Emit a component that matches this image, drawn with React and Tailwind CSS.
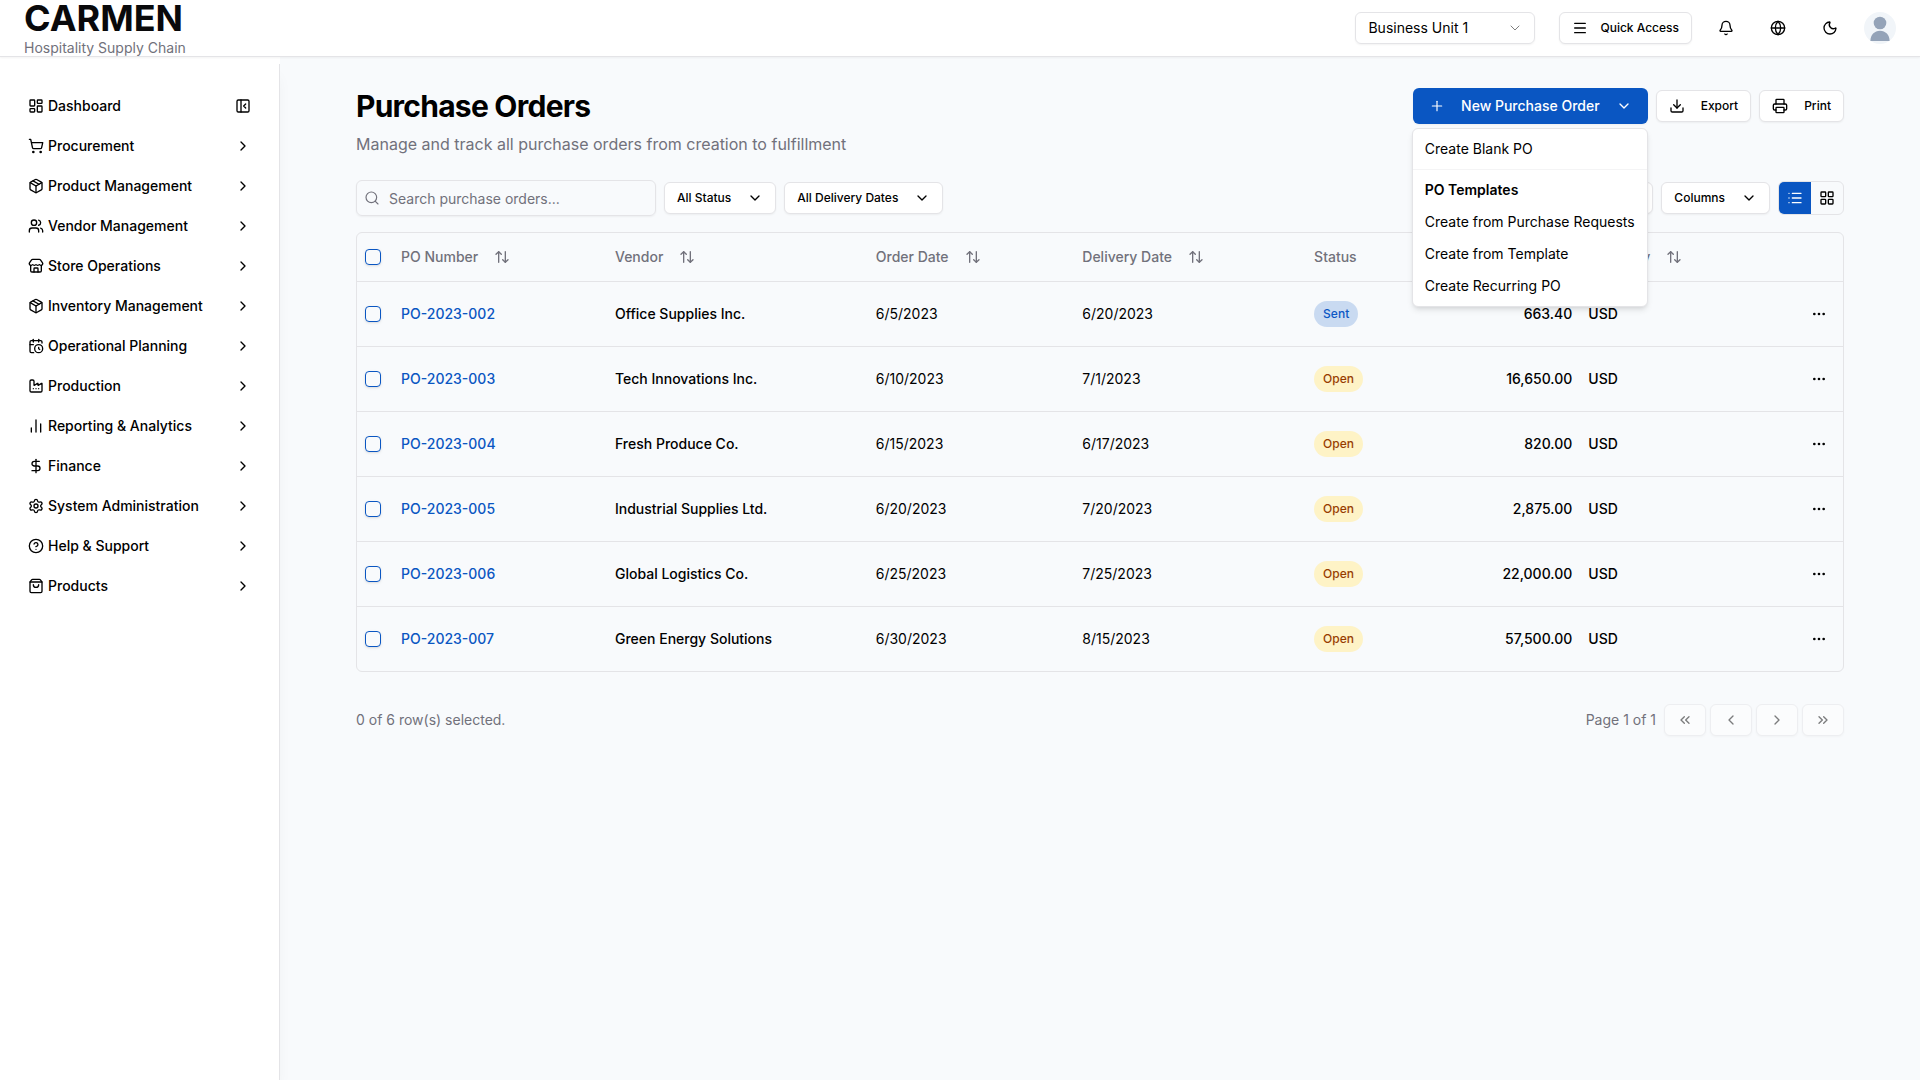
import {
  ArrowUpDown, Bell, CalendarClock, ChartNoAxesColumn, ChevronDown, ChevronLeft, ChevronRight,
  ChevronsLeft, ChevronsRight, CircleQuestionMark, DollarSign, Download, Ellipsis, Factory, Globe,
  LayoutDashboard, LayoutGrid, List, Menu, Moon, Package, PanelLeftClose, Plus, Printer, Search,
  Settings, ShoppingBag, ShoppingCart, Store, Users,
} from "lucide-react";

const NAV = [
  { label: "Dashboard", icon: LayoutDashboard },
  { label: "Procurement", icon: ShoppingCart },
  { label: "Product Management", icon: Package },
  { label: "Vendor Management", icon: Users },
  { label: "Store Operations", icon: Store },
  { label: "Inventory Management", icon: Package },
  { label: "Operational Planning", icon: CalendarClock },
  { label: "Production", icon: Factory },
  { label: "Reporting & Analytics", icon: ChartNoAxesColumn },
  { label: "Finance", icon: DollarSign },
  { label: "System Administration", icon: Settings },
  { label: "Help & Support", icon: CircleQuestionMark },
  { label: "Products", icon: ShoppingBag },
];

const ORDERS = [
  { id: "PO-2023-002", vendor: "Office Supplies Inc.", ordered: "6/5/2023", delivery: "6/20/2023", status: "Sent", amount: "663.40" },
  { id: "PO-2023-003", vendor: "Tech Innovations Inc.", ordered: "6/10/2023", delivery: "7/1/2023", status: "Open", amount: "16,650.00" },
  { id: "PO-2023-004", vendor: "Fresh Produce Co.", ordered: "6/15/2023", delivery: "6/17/2023", status: "Open", amount: "820.00" },
  { id: "PO-2023-005", vendor: "Industrial Supplies Ltd.", ordered: "6/20/2023", delivery: "7/20/2023", status: "Open", amount: "2,875.00" },
  { id: "PO-2023-006", vendor: "Global Logistics Co.", ordered: "6/25/2023", delivery: "7/25/2023", status: "Open", amount: "22,000.00" },
  { id: "PO-2023-007", vendor: "Green Energy Solutions", ordered: "6/30/2023", delivery: "8/15/2023", status: "Open", amount: "57,500.00" },
];

const BADGE = {
  Sent: "bg-[#c9daf1] text-[#0b57c4]",
  Open: "bg-amber-100 text-amber-800",
};

const OUTLINE = "flex h-8 items-center rounded-md border border-zinc-200 bg-white px-3 text-xs font-medium shadow-xs";

function OutlineButton({ children, className = "" }) {
  return <button type="button" className={`${OUTLINE} gap-4 ${className}`}>{children}</button>;
}

function IconButton({ label, icon: Icon }) {
  return (
    <button type="button" aria-label={label} className="flex size-9 items-center justify-center rounded-md">
      <Icon className="size-4" />
    </button>
  );
}

function Header() {
  return (
    <header className="relative z-10 flex h-[57px] items-center justify-between border-b border-zinc-200 bg-white px-6 shadow-xs">
      <a href="#home" className="flex flex-col">
        <span className="text-4xl font-bold text-zinc-950">CARMEN</span>
        <span className="text-sm text-zinc-500">Hospitality Supply Chain</span>
      </a>
      <div className="flex items-center gap-4">
        <div className="relative mr-2">
          <select
            aria-label="Business unit"
            className="h-8 w-45 appearance-none rounded-md border border-zinc-200 bg-transparent px-3 text-sm shadow-xs"
          >
            <option>Business Unit 1</option>
          </select>
          <ChevronDown strokeWidth={1.5} className="pointer-events-none absolute top-2 right-3 size-4 opacity-50" />
        </div>
        <button type="button" className={`${OUTLINE} gap-3`}>
          <Menu className="size-4" />
          Quick Access
        </button>
        <IconButton label="Notifications" icon={Bell} />
        <IconButton label="Language" icon={Globe} />
        <IconButton label="Dark mode" icon={Moon} />
        <button type="button" aria-label="Account">
          <svg viewBox="0 0 32 32" className="size-8">
            <circle cx="16" cy="16" r="16" fill="#f1f5f9" />
            <circle cx="16" cy="11" r="6.3" fill="#94a3b8" />
            <path d="M6.4 29C6.4 23 10.5 18.8 16 18.8S25.6 23 25.6 29Z" fill="#94a3b8" />
          </svg>
        </button>
      </div>
    </header>
  );
}

function Sidebar() {
  return (
    <aside className="flex w-70 shrink-0 flex-col bg-white pt-[7px]">
      <nav aria-label="Main" className="grow border-r border-zinc-200 pt-[22px] pr-7 pl-7 shadow-lg shadow-black/5">
        <ul>
          {NAV.map(({ label, icon: Icon }, i) => (
            <li key={label} className="flex h-10 items-center justify-between">
              <a href="#nav" className="flex items-center gap-1 text-sm font-medium">
                <Icon className="size-4" />
                {label}
              </a>
              <button type="button" aria-label={i === 0 ? "Collapse sidebar" : `Expand ${label}`}>
                {i === 0 ? <PanelLeftClose className="size-4" /> : <ChevronRight className="size-4" />}
              </button>
            </li>
          ))}
        </ul>
      </nav>
    </aside>
  );
}

function NewOrderMenu() {
  const item = "block h-8 w-full px-2 text-left text-sm whitespace-nowrap";
  return (
    <div className="relative">
      <button
        type="button"
        aria-expanded="true"
        className="flex h-9 items-center gap-4 rounded-md bg-[#0a56c2] px-4 text-sm font-medium text-white shadow-xs"
      >
        <Plus strokeWidth={1.75} className="size-4" />
        New Purchase Order
        <ChevronDown className="size-4" />
      </button>
      <div role="menu" className="absolute top-10 right-0 z-20 min-w-full rounded-md border border-zinc-200 bg-white p-1 shadow-md">
        <button type="button" role="menuitem" className={item}>Create Blank PO</button>
        <div role="separator" className="-mx-1 my-1 h-px bg-zinc-100" />
        <div className="flex h-8 items-center px-2 text-sm font-semibold">PO Templates</div>
        <button type="button" role="menuitem" className={item}>Create from Purchase Requests</button>
        <button type="button" role="menuitem" className={item}>Create from Template</button>
        <button type="button" role="menuitem" className={item}>Create Recurring PO</button>
      </div>
    </div>
  );
}

function Check({ label }) {
  return (
    <input
      type="checkbox"
      aria-label={label}
      className="block size-4 appearance-none rounded-sm border border-[#0a56c2] shadow-sm checked:bg-[#0a56c2]"
    />
  );
}

function SortHead({ children, align = "" }) {
  return (
    <th scope="col" className="px-2 text-left font-medium">
      <button type="button" className={`flex items-center gap-4 ${align}`}>
        {children}
        <ArrowUpDown className="size-4" />
      </button>
    </th>
  );
}

function OrdersTable() {
  return (
    <div className="rounded-md border border-zinc-200">
      <table className="w-full table-fixed text-sm">
        <colgroup>
          <col className="w-9" />
          <col className="w-[14.4%]" />
          <col className="w-[17.55%]" />
          <col className="w-[13.9%]" />
          <col className="w-[15.6%]" />
          <col className="w-[8%]" />
          <col className="w-[10.45%]" />
          <col />
          <col className="w-20" />
        </colgroup>
        <thead>
          <tr className="h-12 border-b border-zinc-200 text-zinc-500">
            <th scope="col" className="px-2"><Check label="Select all rows" /></th>
            <SortHead>PO Number</SortHead>
            <SortHead>Vendor</SortHead>
            <SortHead>Order Date</SortHead>
            <SortHead>Delivery Date</SortHead>
            <th scope="col" className="px-2 text-left font-medium">Status</th>
            <SortHead align="ml-auto">Amount</SortHead>
            <SortHead>Currency</SortHead>
            <td />
          </tr>
        </thead>
        <tbody>
          {ORDERS.map((o) => (
            <tr key={o.id} className="h-[65px] border-b border-zinc-200 last:border-b-0">
              <td className="px-2"><Check label={`Select ${o.id}`} /></td>
              <td className="px-2"><a href="#order" className="font-medium text-[#0a56c2]">{o.id}</a></td>
              <td className="px-2 font-medium">{o.vendor}</td>
              <td className="px-2">{o.ordered}</td>
              <td className="px-2">{o.delivery}</td>
              <td className="px-2">
                <span className={`inline-flex rounded-full px-[9px] py-[5px] align-middle text-xs font-medium ${BADGE[o.status]}`}>{o.status}</span>
              </td>
              <td className="px-2 text-right font-medium">{o.amount}</td>
              <td className="px-2 font-medium">USD</td>
              <td className="px-2">
                <button type="button" aria-label={`Actions for ${o.id}`} className="ml-auto flex size-8 items-center justify-center">
                  <Ellipsis className="size-4" />
                </button>
              </td>
            </tr>
          ))}
        </tbody>
      </table>
    </div>
  );
}

function PageButton({ label, icon: Icon }) {
  return (
    <button type="button" disabled aria-label={label} className={`${OUTLINE} opacity-50`}>
      <Icon className="size-4" />
    </button>
  );
}

export default function App() {
  return (
    <div className="flex min-h-screen flex-col bg-slate-50 font-['Inter',sans-serif] text-black">
      <Header />
      <div className="flex grow">
        <Sidebar />
        <main className="min-w-0 grow">
          <div className="mx-auto max-w-[1536px] px-6 pt-[31px]">
            <div className="flex items-start justify-between">
              <div>
                <h1 className="text-3xl font-bold tracking-tight">Purchase Orders</h1>
                <p className="mt-2 text-base text-zinc-500">Manage and track all purchase orders from creation to fulfillment</p>
              </div>
              <div className="flex items-center gap-2">
                <NewOrderMenu />
                <OutlineButton><Download className="size-4" />Export</OutlineButton>
                <OutlineButton><Printer className="size-4" />Print</OutlineButton>
              </div>
            </div>

            <div className="mt-6 flex items-center justify-between">
              <div className="flex items-center gap-2">
                <label className="relative block w-75">
                  <Search strokeWidth={1.75} className="absolute top-2.5 left-2 size-4 text-zinc-500" />
                  <input
                    type="search"
                    aria-label="Search purchase orders"
                    placeholder="Search purchase orders..."
                    className="h-9 w-full rounded-md border border-zinc-200 pr-3 pl-8 text-sm shadow-xs placeholder:text-zinc-500"
                  />
                </label>
                <OutlineButton>All Status<ChevronDown className="size-4" /></OutlineButton>
                <OutlineButton>All Delivery Dates<ChevronDown className="size-4" /></OutlineButton>
              </div>
              <div className="flex items-center gap-2">
                <OutlineButton>Filters<ChevronDown className="size-4" /></OutlineButton>
                <OutlineButton>Columns<ChevronDown className="size-4" /></OutlineButton>
                <div className="flex overflow-hidden rounded-md border border-zinc-200">
                  <button type="button" aria-label="List view" className="flex size-8 items-center justify-center bg-[#0a56c2] text-white">
                    <List className="size-4" />
                  </button>
                  <button type="button" aria-label="Grid view" className="flex size-8 items-center justify-center">
                    <LayoutGrid className="size-4" />
                  </button>
                </div>
              </div>
            </div>

            <div className="mt-4"><OrdersTable /></div>

            <div className="mt-8 flex items-center justify-between pb-8 text-sm text-zinc-500">
              <span>0 of 6 row(s) selected.</span>
              <div className="flex items-center gap-2">
                <span>Page 1 of 1</span>
                <div className="flex gap-1 text-black">
                  <PageButton label="First page" icon={ChevronsLeft} />
                  <PageButton label="Previous page" icon={ChevronLeft} />
                  <PageButton label="Next page" icon={ChevronRight} />
                  <PageButton label="Last page" icon={ChevronsRight} />
                </div>
              </div>
            </div>
          </div>
        </main>
      </div>
    </div>
  );
}
